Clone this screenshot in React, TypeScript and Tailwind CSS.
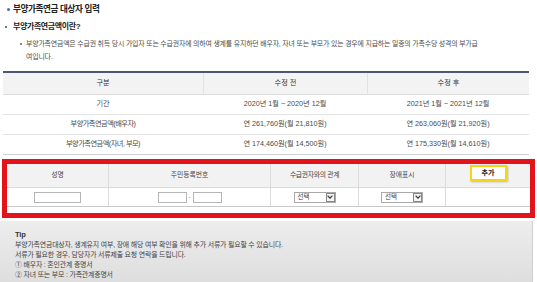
import React from "react";

const font = { fontFamily: '"Liberation Sans", "Noto Sans CJK KR", sans-serif' };

function Select() {
  return (
    <div className="flex h-[11px] w-[42px] items-center justify-between border border-[#a9a9a9] bg-white pl-[3px] text-[6.5px] leading-none text-[#444]">
      <span>선택</span>
      <span className="flex h-[9px] w-[9px] items-center justify-center border border-[#888] bg-[#f4f4f4]">
        <svg width="6" height="4" viewBox="0 0 6 4">
          <path d="M0.6 0.6 L3 3.2 L5.4 0.6" fill="none" stroke="#333" strokeWidth="1.1" />
        </svg>
      </span>
    </div>
  );
}

function Input({ w }: { w: string }) {
  return <div className={`h-[11px] ${w} border border-[#b5b5b5] bg-white`} />;
}

export default function App() {
  return (
    <div style={font} className="relative h-[282px] w-[537px] overflow-hidden bg-white text-[#333]">
      {/* title */}
      <div className="flex h-[18px] items-center pl-[7px]">
        <span className="mr-[3px] h-[3px] w-[3px] rounded-full bg-[#3d6fd1]" />
        <span className="text-[8.6px] font-bold tracking-[-0.4px] text-[#222]">부양가족연금 대상자 입력</span>
      </div>
      {/* subtitle */}
      <div className="flex h-[18px] items-center pl-[5px]">
        <span className="mr-[6px] h-[2px] w-[2px] bg-[#777]" />
        <span className="text-[8px] font-bold tracking-[-0.4px] text-[#222]">부양가족연금액이란?</span>
      </div>
      {/* description */}
      <div className="relative mt-[1px] pl-[26px] pr-[18px] text-[6.9px] leading-[13px] tracking-[-0.15px] text-[#4a4a4a]">
        <span className="absolute left-[20px] top-[6px] h-[1.5px] w-[1.5px] bg-[#888]" />
        부양가족연금액은 수급권 취득 당시 가입자 또는 수급권자에 의하여 생계를 유지하던 배우자, 자녀 또는 부모가 있는 경우에 지급하는 일종의 가족수당 성격의 부가급
        <br />
        여입니다.
      </div>

      {/* comparison table */}
      <div className="ml-[3px] mt-[8px] w-[526px] border-t-2 border-[#4a5775] text-[7.2px] text-[#4a4a4a]">
        <div className="grid h-[22px] grid-cols-[200px_164px_162px] items-center border-b border-[#dcdcdc] bg-[#f3f3f3] text-center text-[#333]">
          <div>구분</div>
          <div className="flex h-full items-center justify-center border-l border-[#e2e2e2]">수정 전</div>
          <div className="flex h-full items-center justify-center border-l border-[#e2e2e2]">수정 후</div>
        </div>
        <div className="grid h-[20px] grid-cols-[200px_164px_162px] items-center border-b border-[#e3e3e3] text-center">
          <div>기간</div>
          <div>2020년 1월 ~ 2020년 12월</div>
          <div>2021년 1월 ~ 2021년 12월</div>
        </div>
        <div className="grid h-[20px] grid-cols-[200px_164px_162px] items-center border-b border-[#e3e3e3] text-center">
          <div className="tracking-[-0.5px]">부양가족연금액(배우자)</div>
          <div>연 261,760원(월 21,810원)</div>
          <div>연 263,060원(월 21,920원)</div>
        </div>
        <div className="grid h-[20px] grid-cols-[200px_164px_162px] items-center border-b border-[#cfcfcf] text-center">
          <div className="tracking-[-0.5px]">부양가족연금액(자녀, 부모)</div>
          <div>연 174,460원(월 14,500원)</div>
          <div>연 175,330원(월 14,610원)</div>
        </div>
      </div>

      {/* input box with red highlight */}
      <div className="ml-[2px] mt-[4px] w-[533px] border-[5px] border-[#e3131b] bg-white">
        <div className="grid h-[24px] grid-cols-[101px_162px_88px_87px_85px] border-b border-[#dadada] bg-[#f2f2f2] text-center text-[6.8px] text-[#444]">
          <div className="flex items-center justify-center">성명</div>
          <div className="flex items-center justify-center border-l border-[#dcdcdc]">주민등록번호</div>
          <div className="flex items-center justify-center border-l border-[#dcdcdc] tracking-[-0.3px]">수급권자와의 관계</div>
          <div className="flex items-center justify-center border-l border-[#dcdcdc]">장애표시</div>
          <div className="flex items-start justify-center border-l border-[#dcdcdc] pt-[1px]">
            <div className="flex h-[16px] w-[37px] items-center justify-center border-[2.5px] border-[#f5d51a] bg-white text-[7px] font-bold text-[#222] shadow-[1px_1px_2px_rgba(0,0,0,0.25)]">
              추가
            </div>
          </div>
        </div>
        <div className="grid h-[19px] grid-cols-[101px_162px_88px_87px_85px] border-b border-[#c8c8c8]">
          <div className="flex items-center justify-center">
            <Input w="w-[47px]" />
          </div>
          <div className="flex items-center justify-center gap-[2px] border-l border-[#dcdcdc] text-[6px] text-[#666]">
            <Input w="w-[29px]" />
            <span>-</span>
            <Input w="w-[29px]" />
          </div>
          <div className="flex items-center justify-center border-l border-[#dcdcdc]">
            <Select />
          </div>
          <div className="flex items-center justify-center border-l border-[#dcdcdc]">
            <Select />
          </div>
          <div className="border-l border-[#dcdcdc]" />
        </div>
        <div className="h-[6px]" />
      </div>

      {/* tip */}
      <div className="mt-[3px] h-[70px] w-[533px] border-r border-[#cfcfcf] bg-gradient-to-b from-[#ededed] to-[#dcdcdc] pl-[15px] pt-[9px] text-[6.9px] leading-[10px] tracking-[-0.15px] text-[#3f3f3f]">
        <div className="text-[7.5px] font-bold text-[#333]">Tip</div>
        <div>부양가족연금대상자, 생계유지 여부, 장애 해당 여부 확인을 위해 추가 서류가 필요할 수 있습니다.</div>
        <div>서류가 필요한 경우, 담당자가 서류제출 요청 연락을 드립니다.</div>
        <div>① 배우자 : 혼인관계 증명서</div>
        <div>② 자녀 또는 부모 : 가족관계증명서</div>
      </div>
    </div>
  );
}
